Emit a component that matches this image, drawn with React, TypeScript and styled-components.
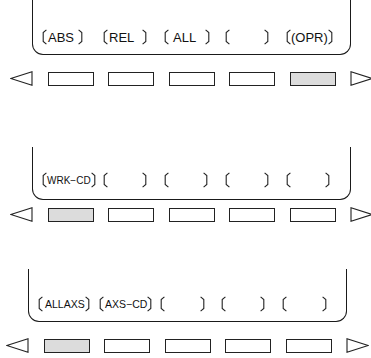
import React from "react";
import styled, { createGlobalStyle } from "styled-components";

const Global = createGlobalStyle`
  html, body { margin: 0; padding: 0; background: #ffffff; }
  body { font-family: "Liberation Sans", Arial, sans-serif; color: #111; }
`;

const Page = styled.div`
  width: 371px;
  height: 358px;
  display: flex;
  flex-direction: column;
  overflow: hidden;
`;

const Section = styled.section<{ $offset: number; $top: number; $keyGap: number }>`
  display: flex;
  flex-direction: column;
  padding-left: ${(p) => p.$offset}px;
  margin-top: ${(p) => p.$top}px;
  row-gap: ${(p) => p.$keyGap}px;
`;

const Panel = styled.div<{ $height: number; $pad: number }>`
  box-sizing: border-box;
  margin-left: 22px;
  width: 319px;
  height: ${(p) => p.$height}px;
  border: 1.7px solid #1a1a1a;
  border-top: none;
  border-radius: 0 0 11px 11px;
  display: flex;
  align-items: flex-end;
  padding: 0 0 ${(p) => p.$pad}px 9px;
`;

const LabelRow = styled.div`
  display: grid;
  grid-template-columns: repeat(5, 61px);
  align-items: center;
`;

const Label = styled.div<{ $w: number; $size: number }>`
  width: ${(p) => p.$w}px;
  height: 16px;
  display: flex;
  align-items: center;
  font-size: ${(p) => p.$size}px;
  line-height: 1;
  white-space: nowrap;
`;

const LabelText = styled.span<{ $pl: number }>`
  flex: 1;
  padding-left: ${(p) => p.$pl}px;
  padding-top: 1px;
`;

const BracketSvg = styled.svg`
  flex: none;
  display: block;
`;

const Bracket = ({ side }: { side: "l" | "r" }) => (
  <BracketSvg width="5" height="16" viewBox="0 0 5 16">
    <path
      d={side === "l" ? "M4.4 0.8 L1.2 3.6 L1.2 12.4 L4.4 15.2" : "M0.6 0.8 L3.8 3.6 L3.8 12.4 L0.6 15.2"}
      fill="none"
      stroke="#222"
      strokeWidth="1.1"
    />
  </BracketSvg>
);

const KeyRow = styled.div`
  display: flex;
  align-items: center;
  height: 15px;
  gap: 14.5px;
`;

const ArrowSvg = styled.svg`
  display: block;
  flex: none;
`;

const Arrow = ({ dir }: { dir: "l" | "r" }) => (
  <ArrowSvg width="23" height="15" viewBox="0 0 23 15">
    <path
      d={dir === "l" ? "M0.8 7.5 L22 0.8 L22 14.2 Z" : "M22.2 7.5 L1 0.8 L1 14.2 Z"}
      fill="none"
      stroke="#222"
      strokeWidth="1.1"
    />
  </ArrowSvg>
);

const SoftKey = styled.div<{ $on: boolean }>`
  box-sizing: border-box;
  width: 46px;
  height: 14px;
  border: 1px solid #222;
  background: ${(p) => (p.$on ? "#dcdcdc" : "#ffffff")};
  flex: none;
`;

type Lbl = { text: string; w: number; pl: number };

type Sec = {
  offset: number;
  top: number;
  height: number;
  pad: number;
  keyGap: number;
  labels: Lbl[];
  active: number;
  size: number;
};

const sections: Sec[] = [
  {
    offset: 10,
    top: 0,
    height: 55,
    pad: 9,
    keyGap: 16,
    size: 13,
    active: 4,
    labels: [
      { text: "ABS", w: 41, pl: 1 },
      { text: "REL", w: 44, pl: 1 },
      { text: "ALL", w: 46, pl: 4 },
      { text: "", w: 44, pl: 0 },
      { text: "(OPR)", w: 47, pl: 0 },
    ],
  },
  {
    offset: 10,
    top: 61,
    height: 53,
    pad: 11,
    keyGap: 7,
    size: 10,
    active: 0,
    labels: [
      { text: "WRK−CD", w: 54, pl: 0 },
      { text: "", w: 44, pl: 0 },
      { text: "", w: 44, pl: 0 },
      { text: "", w: 44, pl: 0 },
      { text: "", w: 44, pl: 0 },
    ],
  },
  {
    offset: 6,
    top: 47,
    height: 53,
    pad: 9,
    keyGap: 16,
    size: 10.5,
    active: 0,
    labels: [
      { text: "ALLAXS", w: 52, pl: 2 },
      { text: "AXS−CD", w: 50, pl: 1 },
      { text: "", w: 45, pl: 0 },
      { text: "", w: 44, pl: 0 },
      { text: "", w: 45, pl: 0 },
    ],
  },
];

export default function App() {
  return (
    <Page>
      <Global />
      {sections.map((s, i) => (
        <Section key={i} $offset={s.offset} $top={s.top} $keyGap={s.keyGap}>
          <Panel $height={s.height} $pad={s.pad}>
            <LabelRow>
              {s.labels.map((l, j) => (
                <Label key={j} $w={l.w} $size={s.size}>
                  <Bracket side="l" />
                  <LabelText $pl={l.pl}>{l.text}</LabelText>
                  <Bracket side="r" />
                </Label>
              ))}
            </LabelRow>
          </Panel>
          <KeyRow>
            <Arrow dir="l" />
            {[0, 1, 2, 3, 4].map((k) => (
              <SoftKey key={k} $on={k === s.active} />
            ))}
            <Arrow dir="r" />
          </KeyRow>
        </Section>
      ))}
    </Page>
  );
}
